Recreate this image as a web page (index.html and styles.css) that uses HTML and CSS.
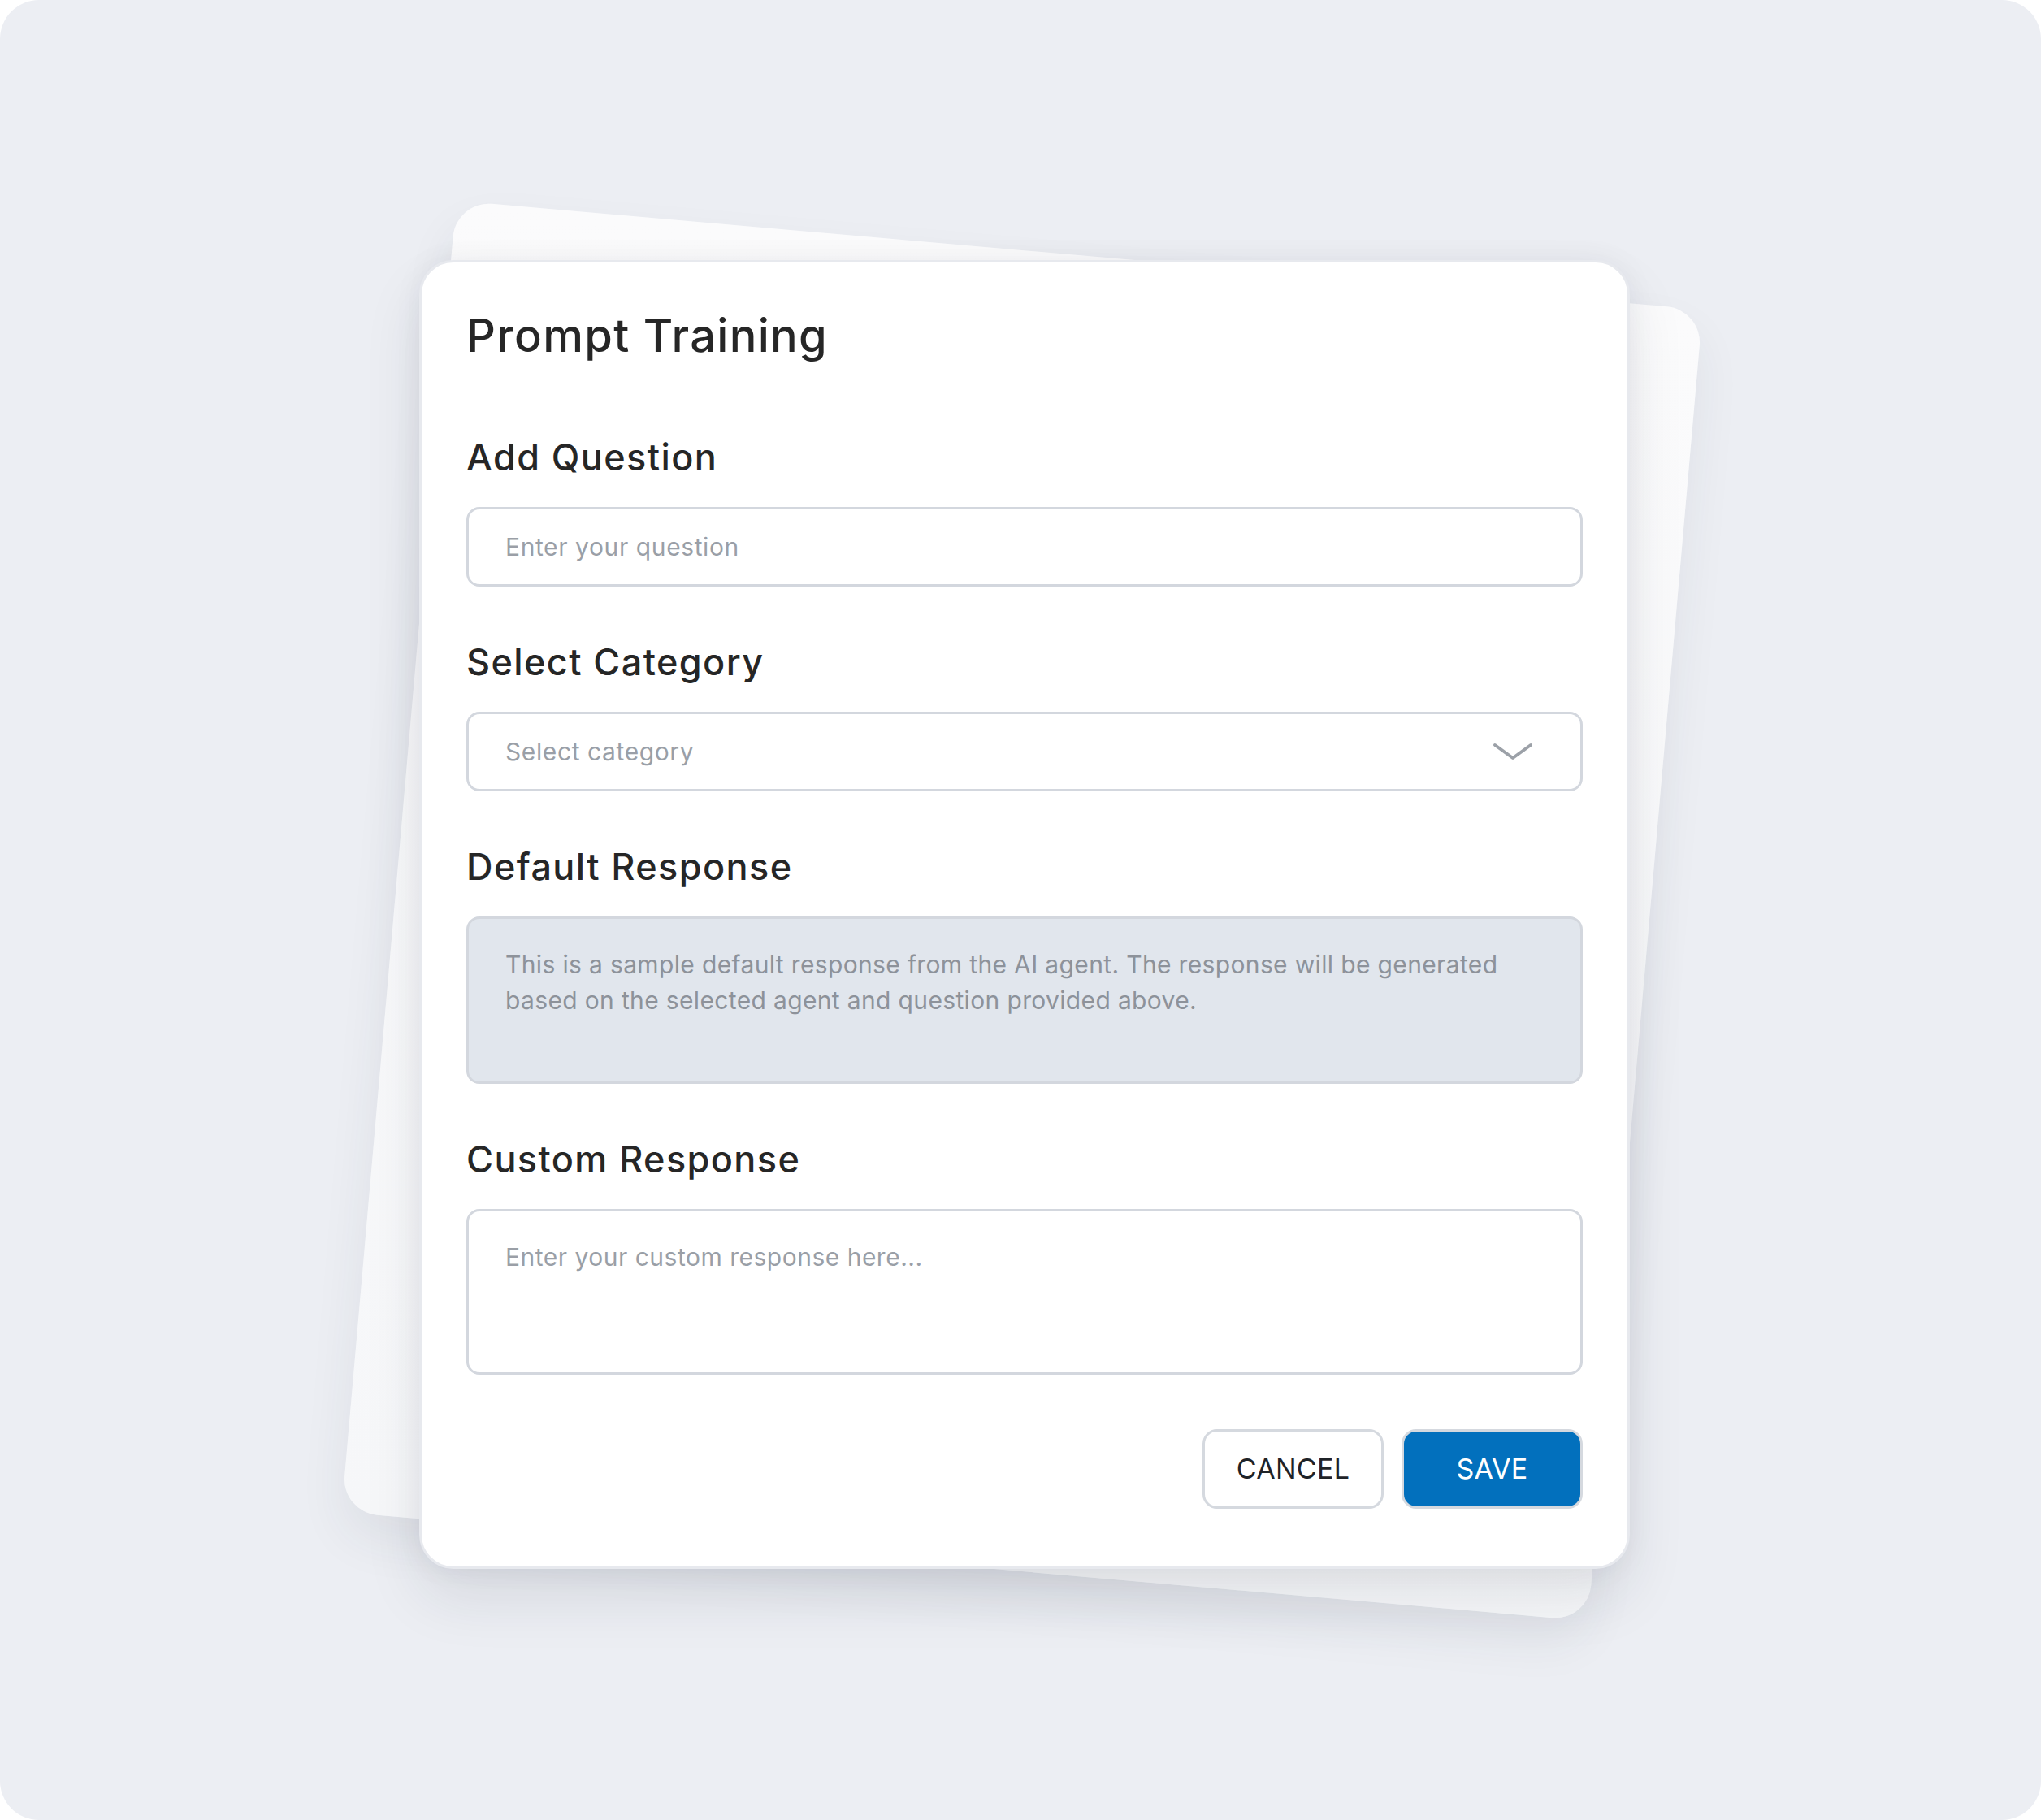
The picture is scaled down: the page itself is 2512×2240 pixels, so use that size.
FILE: index.html
```html
<!DOCTYPE html>
<html lang="en">
<head>
<meta charset="UTF-8">
<title>Prompt Training</title>
<link rel="stylesheet" href="styles.css">
</head>
<body>

<div class="frame">
  <div class="stack">
    <div class="sheet-back"></div>

    <form class="card" id="promptForm">
      <h1 class="card-title">Prompt Training</h1>

      <div class="field">
        <label for="question">Add Question</label>
        <input type="text" id="question" class="input" placeholder="Enter your question">
      </div>

      <div class="field">
        <label for="category">Select Category</label>
        <div class="select-wrap">
          <select id="category" class="input select">
            <option value="">Select category</option>
          </select>
          <svg class="chevron" width="50" height="22" viewBox="0 0 50 22">
            <polyline points="3,3 25,19 47,3" fill="none" stroke="#9ca1a8" stroke-width="4" stroke-linecap="round" stroke-linejoin="round"/>
          </svg>
        </div>
      </div>

      <div class="field">
        <label>Default Response</label>
        <div class="response">This is a sample default response from the AI agent. The response will be generated based on the selected agent and question provided above.</div>
      </div>

      <div class="field">
        <label for="custom">Custom Response</label>
        <textarea id="custom" class="response custom" placeholder="Enter your custom response here..."></textarea>
      </div>

      <div class="actions">
        <button type="button" class="btn btn-cancel">CANCEL</button>
        <button type="submit" class="btn btn-save">SAVE</button>
      </div>
    </form>
  </div>
</div>

</body>
</html>
```

FILE: styles.css
```css
body {
  margin: 0;
  background-color: #fff;
  font-family: 'Inter', 'Noto Sans', sans-serif;
  color: #262626;
}
.frame {
  width: 2512px;
  height: 2240px;
  background-color: #eceef3;
  border-radius: 48px;
  display: flex;
  align-items: center;
  justify-content: center;
  overflow: hidden;
}
.stack {
  position: relative;
  margin: 10px 0 0 10px;
}
.sheet-back {
  position: absolute;
  left: 50%;
  top: 50%;
  width: 1540px;
  height: 1620px;
  margin-left: -770px;
  margin-top: -810px;
  background: linear-gradient(180deg, #fbfbfc 0%, #f6f7f9 100%);
  border-radius: 44px;
  transform: translate(-3px, -4px) rotate(5deg);
  box-shadow: 0 30px 60px rgba(40, 50, 70, 0.07);
}
.card {
  position: relative;
  width: 1490px;
  box-sizing: border-box;
  background-color: #fff;
  border: 3px solid #e7e9ee;
  border-radius: 42px;
  padding: 56px 55px 71px;
  box-shadow: 0 36px 70px rgba(30, 40, 60, 0.10), 0 0 36px rgba(30, 40, 60, 0.05);
}
.card-title {
  margin: 0 0 88px;
  font-size: 56px;
  line-height: 68px;
  font-weight: 500;
  letter-spacing: 1.3px;
  color: #262626;
}
.field + .field {
  margin-top: 65px;
}
.field label {
  display: block;
  font-size: 45px;
  line-height: 56px;
  font-weight: 500;
  letter-spacing: 1.4px;
  margin-bottom: 33px;
  color: #262626;
}
.input {
  display: block;
  width: 100%;
  height: 98px;
  box-sizing: border-box;
  border: 3px solid #d3d7de;
  border-radius: 16px;
  padding: 0 45px;
  font-family: 'Inter', 'Noto Sans', sans-serif;
  font-size: 30px;
  font-weight: 400;
  letter-spacing: 0.6px;
  color: #333;
  background-color: #fff;
  outline: none;
}
.input::placeholder,
.custom::placeholder {
  color: #9a9fa7;
}
.select-wrap {
  position: relative;
}
.select {
  appearance: none;
  -webkit-appearance: none;
  color: #9a9fa7;
}
.chevron {
  position: absolute;
  right: 61px;
  top: 38px;
}
.response {
  display: block;
  width: 100%;
  height: 206px;
  box-sizing: border-box;
  border: 3px solid #d3d7de;
  border-radius: 16px;
  padding: 34px 45px;
  font-family: 'Inter', 'Noto Sans', sans-serif;
  font-size: 30px;
  line-height: 44px;
  letter-spacing: 0.35px;
  background-color: #e1e6ed;
  color: #8d929a;
}
.custom {
  height: 204px;
  background-color: #fff;
  color: #333;
  letter-spacing: 0.5px;
  resize: none;
  outline: none;
  margin: 0;
}
.actions {
  display: flex;
  justify-content: flex-end;
  gap: 22px;
  margin-top: 67px;
}
.btn {
  width: 223px;
  height: 98px;
  box-sizing: border-box;
  border: 3px solid #d5d9df;
  border-radius: 18px;
  font-family: 'Inter', 'Noto Sans', sans-serif;
  font-size: 34px;
  font-weight: 400;
  letter-spacing: 0.3px;
  cursor: pointer;
}
.btn-cancel {
  background-color: #fff;
  color: #1f2328;
}
.btn-save {
  background-color: #0270bd;
  color: #fff;
}
```
